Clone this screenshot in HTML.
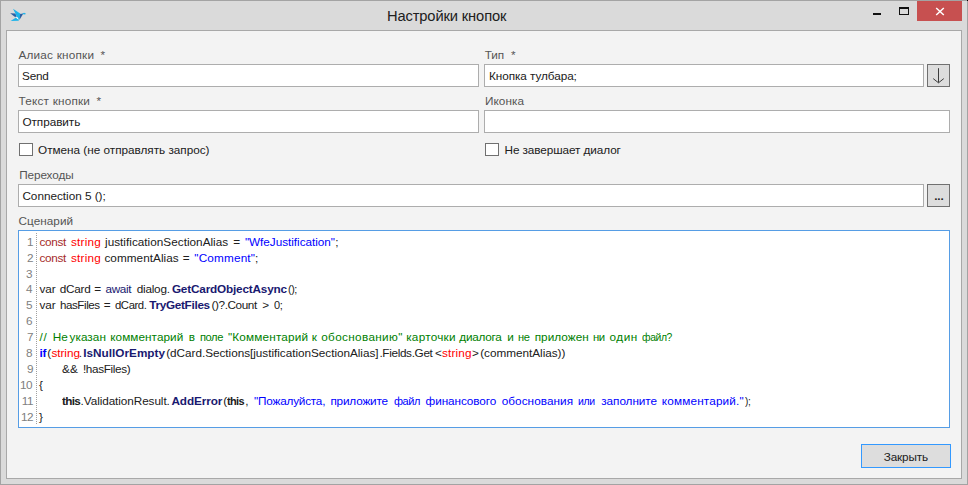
<!DOCTYPE html>
<html lang="ru">
<head>
<meta charset="utf-8">
<title>Настройки кнопок</title>
<style>
html,body{margin:0;padding:0}
body{width:968px;height:485px;position:relative;overflow:hidden;background:#dadada;
  font-family:"Liberation Sans",sans-serif;font-size:12px;line-height:16px;color:#202020}
.abs,.t,.win *{position:absolute;box-sizing:border-box}
.win{position:absolute;left:0;top:0;width:968px;height:485px;box-sizing:border-box;box-shadow:inset 0 0 0 1px #a3a3a3;background:#dadada}
.t{white-space:pre;transform-origin:0 0;line-height:16px;font-size:11.76px;color:#202020}
.t.title{font-size:14.7px;line-height:20px;color:#202020}
.t.lbl{color:#555555}
.t.b{font-weight:700}
.t.n{color:#808080}.t.br{color:#a52a2a}.t.r{color:#ff0000}.t.s{color:#0000ff}.t.g{color:#008000}.t.nv{color:#191970}
.client{left:6px;top:30px;width:956px;height:449px;border:1px solid #a8a8a8;background:#f3f3f3}
.inp{background:#fff;border:1px solid #adadad;height:23px}
.btn{background:#dddddd;border:1px solid #707070}
.chk{width:14px;height:13px;background:#fff;border:1px solid #707070}
.close{left:917px;top:1px;width:45px;height:20px;background:#c75050}
.code{left:18px;top:230px;width:932px;height:198px;background:#fff;border:1px solid #569de5}
.gut{left:36px;top:233px;width:0;height:191px;border-left:1px dotted #a0a0a0}
.ln{position:static !important}
</style>
</head>
<body>
<div class="win">
  <!-- title bar -->
  <svg class="abs" style="left:9px;top:8px" width="18" height="14" viewBox="9 8 18 14">
    <polygon points="10.2,13.3 15.5,13.5 16.6,17.0 14.7,16.7" fill="#2b5fa3"/>
    <polygon points="13.0,8.8 20.5,13.7 19.6,19.8 17.0,17.4 15.4,13.5" fill="#1db3ea"/>
    <polygon points="10.6,20.9 16.1,17.6 19.0,19.7 18.6,20.7" fill="#1db3ea"/>
    <polygon points="15.9,17.1 17.6,17.3 18.5,19.5 16.8,18.6" fill="#ffffff"/>
    <polygon points="20.1,14.1 23.3,13.5 19.6,19.7" fill="#2b5fa3"/>
    <polygon points="22.4,13.6 24.1,12.7 25.8,13.4 25.2,14.4 23.0,14.3" fill="#1db3ea"/>
  </svg>
<span class="t title" style="left:387.00px;top:5.91px;letter-spacing:-0.128px;">Настройки кнопок</span>
  <div class="abs" style="left:873px;top:13px;width:8px;height:2px;background:#111"></div>
  <div class="abs" style="left:899px;top:7px;width:10px;height:8px;border:1px solid #111;border-top-width:2px"></div>
  <div class="close"></div>
  <div class="abs" style="left:967px;top:0;width:1px;height:1px;background:#000"></div>
  <svg class="abs" style="left:935px;top:7px" width="10" height="9" viewBox="0 0 10 9"><path d="M1.2 1 L8.8 8 M8.8 1 L1.2 8" stroke="#fff" stroke-width="1.5" fill="none"/></svg>

  <!-- client area -->
  <div class="client"></div>
  <div class="inp" style="left:18px;top:64px;width:461px"></div>
  <div class="inp" style="left:484px;top:64px;width:440px"></div>
  <div class="btn" style="left:927px;top:64px;width:23px;height:23px"></div>
  <svg class="abs" style="left:931px;top:67px" width="16" height="18" viewBox="931 67 16 18"><path d="M938.5 68.2 V82.6 M933.2 78.6 L938.5 82.8 L943.8 78.6" stroke="#3c3c3c" stroke-width="1" fill="none"/></svg>
  <div class="inp" style="left:18px;top:110px;width:461px"></div>
  <div class="inp" style="left:484px;top:110px;width:466px"></div>
  <div class="chk" style="left:19px;top:143px"></div>
  <div class="chk" style="left:485px;top:143px"></div>
  <div class="inp" style="left:18px;top:184px;width:906px"></div>
  <div class="btn" style="left:927px;top:184px;width:23px;height:23px"></div>
  <div class="code"></div>
  <div class="gut"></div>
  <div class="btn" style="left:861px;top:444px;width:90px;height:24px;border-color:#3399ff"></div>
<span class="t lbl" style="left:18.40px;top:46.93px;letter-spacing:0.227px;">Алиас кнопки</span>
<span class="t lbl" style="left:100.60px;top:46.93px;">*</span>
<span class="t lbl" style="left:484.70px;top:46.93px;letter-spacing:-0.062px;">Тип</span>
<span class="t lbl" style="left:511.00px;top:46.93px;">*</span>
<span class="t" style="left:22.00px;top:67.93px;letter-spacing:-0.202px;">Send</span>
<span class="t" style="left:489.00px;top:67.93px;letter-spacing:-0.063px;">Кнопка тулбара;</span>
<span class="t lbl" style="left:18.60px;top:92.93px;letter-spacing:0.199px;">Текст кнопки</span>
<span class="t lbl" style="left:96.60px;top:92.93px;">*</span>
<span class="t lbl" style="left:485.00px;top:92.93px;letter-spacing:0.052px;">Иконка</span>
<span class="t" style="left:22.40px;top:113.93px;letter-spacing:-0.043px;">Отправить</span>
<span class="t" style="left:38.00px;top:141.93px;letter-spacing:-0.011px;">Отмена (не отправлять запрос)</span>
<span class="t" style="left:504.50px;top:141.93px;letter-spacing:-0.084px;">Не завершает диалог</span>
<span class="t lbl" style="left:19.20px;top:166.93px;letter-spacing:-0.095px;">Переходы</span>
<span class="t" style="left:22.40px;top:187.93px;letter-spacing:-0.016px;">Connection 5 ();</span>
<span class="t lbl" style="left:18.60px;top:212.93px;letter-spacing:0.023px;">Сценарий</span>
<span class="t" style="left:883.80px;top:448.93px;letter-spacing:-0.156px;">Закрыть</span>
<span class="t b" style="left:934.30px;top:187.93px;letter-spacing:-0.215px;">...</span>
<div class="ln"><span class="t c n" style="left:27.00px;top:233.93px;">1</span><span class="t c br" style="left:39.40px;top:233.93px;letter-spacing:-0.305px;">const</span><span class="t c r" style="left:71.00px;top:233.93px;letter-spacing:0.200px;">string</span><span class="t c" style="left:105.00px;top:233.93px;letter-spacing:0.016px;">justificationSectionAlias</span><span class="t c" style="left:233.15px;top:233.93px;">=</span><span class="t c s" style="left:244.90px;top:233.93px;letter-spacing:-0.032px;">"WfeJustification"</span><span class="t c" style="left:335.35px;top:233.93px;">;</span></div>
<div class="ln"><span class="t c n" style="left:27.00px;top:249.93px;">2</span><span class="t c br" style="left:39.40px;top:249.93px;letter-spacing:-0.305px;">const</span><span class="t c r" style="left:71.00px;top:249.93px;letter-spacing:0.200px;">string</span><span class="t c" style="left:104.40px;top:249.93px;letter-spacing:0.044px;">commentAlias</span><span class="t c" style="left:182.85px;top:249.93px;">=</span><span class="t c s" style="left:194.30px;top:249.93px;letter-spacing:0.175px;">"Comment"</span><span class="t c" style="left:255.05px;top:249.93px;">;</span></div>
<div class="ln"><span class="t c n" style="left:26.00px;top:265.93px;">3</span></div>
<div class="ln"><span class="t c n" style="left:26.00px;top:280.93px;">4</span><span class="t c" style="left:39.40px;top:280.93px;">var</span><span class="t c" style="left:59.80px;top:280.93px;letter-spacing:-0.267px;">dCard</span><span class="t c" style="left:94.25px;top:280.93px;">=</span><span class="t c nv" style="left:105.50px;top:280.93px;letter-spacing:-0.366px;">await</span><span class="t c" style="left:136.70px;top:280.93px;letter-spacing:-0.227px;">dialog.</span><span class="t c b nv" style="left:171.90px;top:280.93px;letter-spacing:-0.174px;">GetCardObjectAsync</span><span class="t c" style="left:288.20px;top:280.93px;letter-spacing:-0.450px;transform:scaleX(0.917);">();</span></div>
<div class="ln"><span class="t c n" style="left:26.00px;top:296.93px;">5</span><span class="t c" style="left:39.40px;top:296.93px;">var</span><span class="t c" style="left:59.80px;top:296.93px;letter-spacing:-0.450px;transform:scaleX(0.987);">hasFiles</span><span class="t c" style="left:103.75px;top:296.93px;">=</span><span class="t c" style="left:114.60px;top:296.93px;letter-spacing:-0.450px;transform:scaleX(0.965);">dCard.</span><span class="t c b nv" style="left:149.30px;top:296.93px;letter-spacing:-0.316px;">TryGetFiles</span><span class="t c" style="left:211.60px;top:296.93px;letter-spacing:-0.427px;">()?.Count</span><span class="t c" style="left:262.25px;top:296.93px;">&gt;</span><span class="t c" style="left:273.60px;top:296.93px;letter-spacing:-0.450px;transform:scaleX(0.936);">0;</span></div>
<div class="ln"><span class="t c n" style="left:26.00px;top:312.93px;">6</span></div>
<div class="ln"><span class="t c n" style="left:27.00px;top:328.93px;">7</span><span class="t c g" style="left:39.40px;top:328.93px;letter-spacing:0.835px;">//</span><span class="t c g" style="left:52.70px;top:328.93px;">Не</span><span class="t c g" style="left:69.50px;top:328.93px;letter-spacing:0.060px;">указан</span><span class="t c g" style="left:110.30px;top:328.93px;letter-spacing:0.053px;">комментарий</span><span class="t c g" style="left:188.65px;top:328.93px;">в</span><span class="t c g" style="left:199.60px;top:328.93px;letter-spacing:-0.450px;transform:scaleX(0.947);">поле</span><span class="t c g" style="left:227.90px;top:328.93px;letter-spacing:0.181px;">"Комментарий</span><span class="t c g" style="left:311.70px;top:328.93px;">к</span><span class="t c g" style="left:321.20px;top:328.93px;letter-spacing:0.345px;">обоснованию"</span><span class="t c g" style="left:406.20px;top:328.93px;letter-spacing:0.257px;">карточки</span><span class="t c g" style="left:459.30px;top:328.93px;letter-spacing:-0.251px;">диалога</span><span class="t c g" style="left:507.25px;top:328.93px;">и</span><span class="t c g" style="left:517.50px;top:328.93px;letter-spacing:-0.450px;transform:scaleX(0.943);">не</span><span class="t c g" style="left:534.70px;top:328.93px;letter-spacing:0.050px;">приложен</span><span class="t c g" style="left:593.20px;top:328.93px;letter-spacing:-0.450px;transform:scaleX(0.964);">ни</span><span class="t c g" style="left:609.60px;top:328.93px;letter-spacing:0.468px;">один</span><span class="t c g" style="left:641.70px;top:328.93px;letter-spacing:-0.450px;transform:scaleX(0.882);">файл?</span></div>
<div class="ln"><span class="t c n" style="left:26.00px;top:344.93px;">8</span><span class="t c b s" style="left:39.60px;top:344.93px;letter-spacing:-0.465px;">if</span><span class="t c" style="left:47.35px;top:344.93px;">(</span><span class="t c r" style="left:51.40px;top:344.93px;letter-spacing:-0.040px;">string</span><span class="t c" style="left:78.85px;top:344.93px;">.</span><span class="t c b nv" style="left:83.20px;top:344.93px;letter-spacing:0.018px;">IsNullOrEmpty</span><span class="t c" style="left:166.20px;top:344.93px;letter-spacing:-0.029px;">(dCard.Sections[justificationSectionAlias]</span><span class="t c" style="left:379.40px;top:344.93px;letter-spacing:-0.335px;">.Fields.Get</span><span class="t c" style="left:434.90px;top:344.93px;">&lt;</span><span class="t c r" style="left:442.00px;top:344.93px;letter-spacing:0.160px;">string</span><span class="t c" style="left:471.90px;top:344.93px;">&gt;</span><span class="t c" style="left:480.20px;top:344.93px;letter-spacing:-0.022px;">(commentAlias))</span></div>
<div class="ln"><span class="t c n" style="left:27.00px;top:360.93px;">9</span><span class="t c" style="left:62.10px;top:360.93px;">&amp;&amp;</span><span class="t c" style="left:82.90px;top:360.93px;letter-spacing:-0.346px;">!hasFiles)</span></div>
<div class="ln"><span class="t c n" style="left:19.97px;top:376.93px;letter-spacing:-0.500px;">10</span><span class="t c" style="left:39.00px;top:376.93px;">{</span></div>
<div class="ln"><span class="t c n" style="left:21.84px;top:392.93px;letter-spacing:-0.500px;">11</span><span class="t c b" style="left:61.60px;top:392.93px;letter-spacing:-0.700px;transform:scaleX(0.997);">this</span><span class="t c" style="left:80.60px;top:392.93px;letter-spacing:-0.077px;">.ValidationResult.</span><span class="t c b nv" style="left:171.40px;top:392.93px;letter-spacing:-0.086px;">AddError</span><span class="t c" style="left:223.35px;top:392.93px;">(</span><span class="t c b" style="left:227.30px;top:392.93px;letter-spacing:-0.700px;transform:scaleX(0.935);">this</span><span class="t c" style="left:245.20px;top:392.93px;">,</span><span class="t c s" style="left:254.10px;top:392.93px;letter-spacing:-0.206px;">"Пожалуйста,</span><span class="t c s" style="left:330.40px;top:392.93px;letter-spacing:-0.166px;">приложите</span><span class="t c s" style="left:394.20px;top:392.93px;letter-spacing:-0.450px;transform:scaleX(0.933);">файл</span><span class="t c s" style="left:425.60px;top:392.93px;letter-spacing:-0.086px;">финансового</span><span class="t c s" style="left:501.70px;top:392.93px;letter-spacing:0.060px;">обоснования</span><span class="t c s" style="left:577.70px;top:392.93px;letter-spacing:-0.450px;transform:scaleX(0.891);">или</span><span class="t c s" style="left:601.30px;top:392.93px;letter-spacing:-0.065px;">заполните</span><span class="t c s" style="left:661.80px;top:392.93px;letter-spacing:0.167px;">комментарий."</span><span class="t c" style="left:744.50px;top:392.93px;letter-spacing:-0.450px;transform:scaleX(0.851);">);</span></div>
<div class="ln"><span class="t c n" style="left:20.97px;top:408.93px;letter-spacing:-0.500px;">12</span><span class="t c" style="left:39.00px;top:408.93px;">}</span></div>
</div>
</body>
</html>
